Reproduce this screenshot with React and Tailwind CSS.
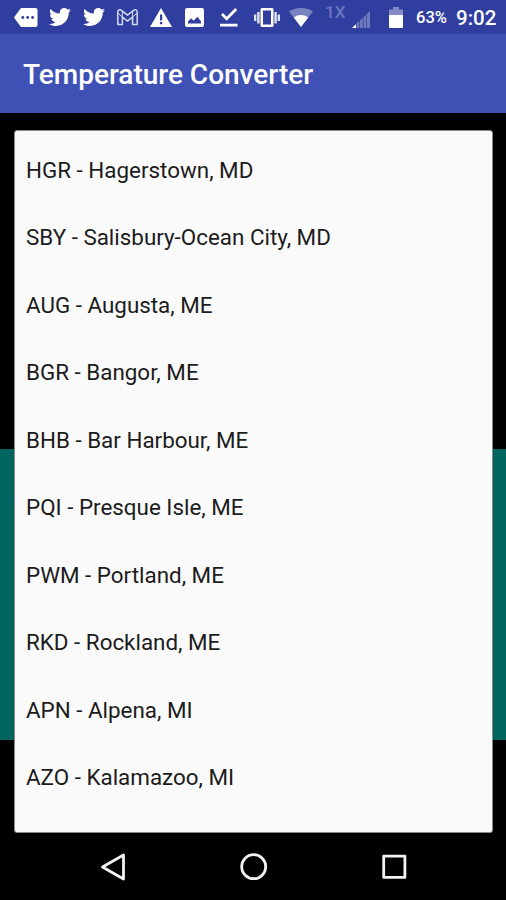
import { FaTwitter } from 'react-icons/fa'

const airports = [
  'HGR - Hagerstown, MD',
  'SBY - Salisbury-Ocean City, MD',
  'AUG - Augusta, ME',
  'BGR - Bangor, ME',
  'BHB - Bar Harbour, ME',
  'PQI - Presque Isle, ME',
  'PWM - Portland, ME',
  'RKD - Rockland, ME',
  'APN - Alpena, MI',
  'AZO - Kalamazoo, MI',
]

function StatusBar() {
  return (
    <div className="flex h-[34px] items-start bg-[#303f9f] pl-[14px] text-white">
      <svg className="mt-2 h-[19px] w-6 shrink-0" viewBox="0 0 24 19" fill="currentColor">
        <path d="M7 0h14.5a2 2 0 0 1 2 2v15a2 2 0 0 1-2 2H7L0 9.5z" />
        <g fill="#303f9f">
          <circle cx="8.8" cy="9.5" r="1.4" />
          <circle cx="13.7" cy="9.5" r="1.4" />
          <circle cx="18.6" cy="9.5" r="1.4" />
        </g>
      </svg>
      <FaTwitter className="ml-[11px] mt-[6px] size-[22px] shrink-0" />
      <FaTwitter className="ml-[12px] mt-[6px] size-[22px] shrink-0" />
      <svg className="ml-[12px] mt-[9px] h-[17px] w-[21px] shrink-0" viewBox="0 0 21 17" fill="none" stroke="#d5d9f2" strokeWidth="1.5" strokeLinejoin="round">
        <path d="M.8 15.6V3C.8.7 3.1.2 4.4 1.3l6.1 4.9 6.1-4.9c1.3-1.1 3.6-.6 3.6 1.7v12.6h-4.6V8l-5.1 4.1L5.4 8v7.6z" />
        <path d="M5.4 2v6M15.6 2v6M.8 4l4.6 4M20.2 4l-4.6 4" strokeWidth="1" />
      </svg>
      <svg className="ml-[12px] mt-2 h-[19px] w-[22px] shrink-0" viewBox="0 0 22 19" fill="currentColor">
        <path d="M11 0l11 19H0z" />
        <path d="M10 6.5h2.2v6H10zM10 14h2.2v2.2H10z" fill="#303f9f" />
      </svg>
      <svg className="ml-[13px] mt-2 size-[19px] shrink-0" viewBox="0 0 19 19" fill="currentColor">
        <rect width="19" height="19" rx="2" />
        <path d="M3 15.5v-2l3.2-3.3 2.4 2.6 3.8-4.1 3.6 4.8v2z" fill="#303f9f" />
      </svg>
      <svg className="ml-[16px] mt-[7px] h-5 w-[18px] shrink-0" viewBox="0 0 18 20" fill="none" stroke="currentColor" strokeWidth="2.8">
        <path d="M2 7l4.7 4.7L16.2 2M0 18.2h17.5" />
      </svg>
      <svg className="ml-[16px] mt-2 h-5 w-[26px] shrink-0" viewBox="0 0 26 20" fill="currentColor">
        <path d="M8 0h10a1.5 1.5 0 0 1 1.5 1.5v16A1.5 1.5 0 0 1 18 19H8a1.5 1.5 0 0 1-1.5-1.5v-16A1.5 1.5 0 0 1 8 0zM9 2.5v14h8v-14z" fillRule="evenodd" />
        <path d="M3.2 4h2.4v11.5H3.2zM20.4 4h2.4v11.5h-2.4zM0 6.5h2.4v6.5H0zM23.6 6.5H26v6.5h-2.4z" opacity=".85" />
      </svg>
      <svg className="ml-[9px] mt-2 h-[19px] w-6 shrink-0" viewBox="0 0 24 19" fill="currentColor">
        <path d="M0 3.5C7-1.2 17-1.2 24 3.5L12 19z" opacity=".35" />
        <path d="M4.8 9.5c4.3-3.3 10.1-3.3 14.4 0L12 19z" />
      </svg>
      <span className="ml-[12px] mt-[2px] w-5 text-[17px] leading-5 font-medium text-[#6a76be]">1X</span>
      <svg className="ml-[7px] mt-[11px] h-[17px] w-[18px] shrink-0" viewBox="0 0 18 17" fill="currentColor">
        <path d="M0 17l4-3.8V17z" />
        <path d="M4.5 17v-4.2l2.8-2.7V17zM8 17V9.5l2.8-2.7V17zM11.5 17V6.1l2.7-2.5V17zM14.9 17V2.9L18 0v17z" opacity=".3" />
      </svg>
      <svg className="ml-[19px] mt-[7px] h-[21px] w-[14px] shrink-0" viewBox="0 0 14 21" fill="currentColor">
        <path d="M0 8V3.5a1 1 0 0 1 1-1h3V0h6v2.5h3a1 1 0 0 1 1 1V8z" opacity=".4" />
        <path d="M0 8h14v12a1 1 0 0 1-1 1H1a1 1 0 0 1-1-1z" />
      </svg>
      <span className="ml-[13px] mt-[8px] w-[32px] text-[16.5px] leading-5 font-medium">63%</span>
      <span className="ml-[8px] mt-[6px] text-[20.5px] leading-6 font-medium">9:02</span>
    </div>
  )
}

function NavBar() {
  return (
    <nav className="flex h-[67px] items-center justify-between pl-[100px] pr-[98px] text-[#f2f2f2]">
      <svg className="size-7" viewBox="0 0 28 28" fill="none" stroke="currentColor" strokeWidth="2.8" strokeLinejoin="round">
        <path d="M23.5 2v24L2.5 14z" />
      </svg>
      <svg className="size-7" viewBox="0 0 28 28" fill="none" stroke="currentColor" strokeWidth="2.8">
        <circle cx="13.7" cy="13.7" r="12" />
      </svg>
      <svg className="size-7" viewBox="0 0 28 28" fill="none" stroke="currentColor" strokeWidth="2.8" strokeLinejoin="round">
        <rect x="3.7" y="3.2" width="21.2" height="21.2" />
      </svg>
    </nav>
  )
}

function App() {
  return (
    <div className="flex h-[900px] w-[506px] flex-col overflow-hidden bg-black font-[Roboto,sans-serif]">
      <StatusBar />
      <header className="flex h-[79px] items-center bg-[#3f51b5] pt-[3px] pl-[23px]">
        <h1 className="text-[28px] font-medium text-white">Temperature Converter</h1>
      </header>
      <main className="h-[720px] bg-[linear-gradient(to_bottom,#000_336px,#00645f_336px,#00645f_627px,#000_627px)] px-[14px] pt-[17px]">
        <ul className="h-[703px] w-[479px] rounded-[3px] border border-[#8a8a8a] bg-[#fafafa] pt-[6px]">
          {airports.map((airport) => (
            <li key={airport} className="flex h-[67.5px] items-center pl-[11px] text-[22.4px] text-[#1c1c1c]">
              {airport}
            </li>
          ))}
        </ul>
      </main>
      <NavBar />
    </div>
  )
}

export default App
